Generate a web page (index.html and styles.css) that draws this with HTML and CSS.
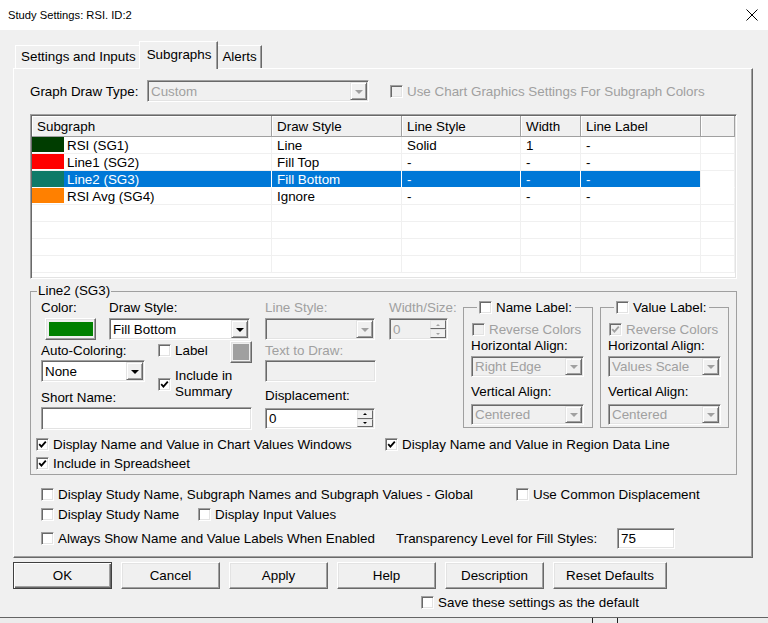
FILE: index.html
```html
<!DOCTYPE html>
<html lang="en">
<head>
  <meta charset="UTF-8">
  <title>Study Settings: RSI. ID:2</title>
  <link rel="stylesheet" href="styles.css">
</head>
<body>
  <div class="titlebar">
    <span class="title">Study Settings: RSI. ID:2</span>
    <svg class="close" width="12" height="12" viewBox="0 0 12 12"><path d="M0.5 0.5L11.5 11.5M11.5 0.5L0.5 11.5" stroke="#000" stroke-width="1" fill="none"/></svg>
  </div>

  <div class="dialog">
    <div class="tabs">
      <div class="tab">Settings and Inputs</div>
      <div class="tab active">Subgraphs</div>
      <div class="tab">Alerts</div>
    </div>

    <div class="panel">
      <!-- graph draw type -->
      <div class="draw-type">
        <span class="dt-label">Graph Draw Type:</span>
        <div class="field combo off w-custom"><span>Custom</span><span class="arrow"><i class="tri"></i></span></div>
        <div class="check off chart-colors"><span class="cb"></span>Use Chart Graphics Settings For Subgraph Colors</div>
      </div>

      <!-- subgraph list -->
      <div class="list">
        <div class="lhead">
          <div class="c c1">Subgraph</div>
          <div class="c c2">Draw Style</div>
          <div class="c c3">Line Style</div>
          <div class="c c4">Width</div>
          <div class="c c5">Line Label</div>
          <div class="c c6"></div>
        </div>
        <div class="lrow">
          <div class="c c1"><span class="sw" style="background:#003d00"></span><span class="name">RSI (SG1)</span></div>
          <div class="c c2">Line</div>
          <div class="c c3">Solid</div>
          <div class="c c4">1</div>
          <div class="c c5">-</div>
          <div class="c c6"></div>
        </div>
        <div class="lrow">
          <div class="c c1"><span class="sw" style="background:#ff0000"></span><span class="name">Line1 (SG2)</span></div>
          <div class="c c2">Fill Top</div>
          <div class="c c3">-</div>
          <div class="c c4">-</div>
          <div class="c c5">-</div>
          <div class="c c6"></div>
        </div>
        <div class="lrow sel">
          <div class="c c1"><span class="sw" style="background:#0e7a68"></span><span class="name">Line2 (SG3)</span></div>
          <div class="c c2">Fill Bottom</div>
          <div class="c c3">-</div>
          <div class="c c4">-</div>
          <div class="c c5">-</div>
          <div class="c c6"></div>
        </div>
        <div class="lrow">
          <div class="c c1"><span class="sw" style="background:#ff8000"></span><span class="name">RSI Avg (SG4)</span></div>
          <div class="c c2">Ignore</div>
          <div class="c c3">-</div>
          <div class="c c4">-</div>
          <div class="c c5">-</div>
          <div class="c c6"></div>
        </div>
        <div class="lrow"><div class="c c1"></div><div class="c c2"></div><div class="c c3"></div><div class="c c4"></div><div class="c c5"></div><div class="c c6"></div></div>
        <div class="lrow"><div class="c c1"></div><div class="c c2"></div><div class="c c3"></div><div class="c c4"></div><div class="c c5"></div><div class="c c6"></div></div>
        <div class="lrow"><div class="c c1"></div><div class="c c2"></div><div class="c c3"></div><div class="c c4"></div><div class="c c5"></div><div class="c c6"></div></div>
        <div class="lrow"><div class="c c1"></div><div class="c c2"></div><div class="c c3"></div><div class="c c4"></div><div class="c c5"></div><div class="c c6"></div></div>
      </div>

      <!-- selected subgraph -->
      <fieldset class="group">
        <legend>Line2 (SG3)</legend>
        <div class="group-body">
          <div class="group-top">
            <div class="col-a">
              <div class="a-row1">
                <div class="f-color">
                  <div class="lbl">Color:</div>
                  <div class="btn3d colorbtn"><span class="swatch green"></span></div>
                </div>
                <div class="f-draw">
                  <div class="lbl">Draw Style:</div>
                  <div class="field combo w-draw"><span>Fill Bottom</span><span class="arrow"><i class="tri"></i></span></div>
                </div>
              </div>
              <div class="a-grid">
                <div class="lbl auto-lbl">Auto-Coloring:</div>
                <div class="field combo w-none"><span>None</span><span class="arrow"><i class="tri"></i></span></div>
                <div class="lbl short-lbl">Short Name:</div>
                <div class="field w-short"></div>
                <div class="checks">
                  <div class="label-row">
                    <div class="check label-check"><span class="cb"></span>Label</div>
                    <div class="btn3d graybtn"><span class="swatch gray"></span></div>
                  </div>
                  <div class="check summary"><span class="cb"><svg width="9" height="9" viewBox="0 0 9 9"><polyline points="1.2,4.2 3.4,6.6 7.8,1.6" fill="none" stroke="#000" stroke-width="1.8"/></svg></span><span>Include in<br>Summary</span></div>
                </div>
              </div>
            </div>

            <div class="col-b">
              <div class="lbl off">Line Style:</div>
              <div class="field combo off w-b b-combo"><span></span><span class="arrow"><i class="tri"></i></span></div>
              <div class="lbl off b-text-lbl">Text to Draw:</div>
              <div class="field off w-b b-text"></div>
              <div class="lbl b-disp-lbl">Displacement:</div>
              <div class="field spin w-b b-disp"><span>0</span><span class="spin-btns"><span><i class="up"></i></span><span><i class="down"></i></span></span></div>
            </div>

            <div class="col-w">
              <div class="lbl off">Width/Size:</div>
              <div class="field spin off w-width"><span>0</span><span class="spin-btns"><span><i class="up"></i></span><span><i class="down"></i></span></span></div>
            </div>

            <fieldset class="sub name-group">
              <legend><span class="check"><span class="cb"></span>Name Label:</span></legend>
              <div class="check off rev"><span class="cb"></span>Reverse Colors</div>
              <div class="lbl h-lbl">Horizontal Align:</div>
              <div class="field combo off w-align"><span>Right Edge</span><span class="arrow"><i class="tri"></i></span></div>
              <div class="lbl v-lbl">Vertical Align:</div>
              <div class="field combo off w-align v-combo"><span>Centered</span><span class="arrow"><i class="tri"></i></span></div>
            </fieldset>

            <fieldset class="sub value-group">
              <legend><span class="check"><span class="cb"></span>Value Label:</span></legend>
              <div class="check off rev"><span class="cb"><svg width="9" height="9" viewBox="0 0 9 9"><polyline points="1.2,4.2 3.4,6.6 7.8,1.6" fill="none" stroke="#a0a0a0" stroke-width="1.8"/></svg></span>Reverse Colors</div>
              <div class="lbl h-lbl">Horizontal Align:</div>
              <div class="field combo off w-align"><span>Values Scale</span><span class="arrow"><i class="tri"></i></span></div>
              <div class="lbl v-lbl">Vertical Align:</div>
              <div class="field combo off w-align v-combo"><span>Centered</span><span class="arrow"><i class="tri"></i></span></div>
            </fieldset>
          </div>

          <div class="g-row">
            <div class="check w-chart"><span class="cb"><svg width="9" height="9" viewBox="0 0 9 9"><polyline points="1.2,4.2 3.4,6.6 7.8,1.6" fill="none" stroke="#000" stroke-width="1.8"/></svg></span>Display Name and Value in Chart Values Windows</div>
            <div class="check"><span class="cb"><svg width="9" height="9" viewBox="0 0 9 9"><polyline points="1.2,4.2 3.4,6.6 7.8,1.6" fill="none" stroke="#000" stroke-width="1.8"/></svg></span>Display Name and Value in Region Data Line</div>
          </div>
          <div class="g-row g-row2">
            <div class="check"><span class="cb"><svg width="9" height="9" viewBox="0 0 9 9"><polyline points="1.2,4.2 3.4,6.6 7.8,1.6" fill="none" stroke="#000" stroke-width="1.8"/></svg></span>Include in Spreadsheet</div>
          </div>
        </div>
      </fieldset>

      <!-- global options -->
      <div class="globals">
        <div class="gl-row r1">
          <div class="check w-global"><span class="cb"></span>Display Study Name, Subgraph Names and Subgraph Values - Global</div>
          <div class="check"><span class="cb"></span>Use Common Displacement</div>
        </div>
        <div class="gl-row r2">
          <div class="check w-study"><span class="cb"></span>Display Study Name</div>
          <div class="check"><span class="cb"></span>Display Input Values</div>
        </div>
        <div class="gl-row r3">
          <div class="check w-always"><span class="cb"></span>Always Show Name and Value Labels When Enabled</div>
          <span class="w-transp">Transparency Level for Fill Styles:</span>
          <div class="field w-75"><span>75</span></div>
        </div>
      </div>
    </div>

    <div class="buttons">
      <div class="btn default">OK</div>
      <div class="btn">Cancel</div>
      <div class="btn">Apply</div>
      <div class="btn">Help</div>
      <div class="btn">Description</div>
      <div class="btn wide">Reset Defaults</div>
    </div>
    <div class="check save"><span class="cb"></span>Save these settings as the default</div>
  </div>

  <div class="edge"></div>
  <div class="under"><span class="mark m1"></span><span class="mark m2"></span></div>
</body>
</html>
```

FILE: styles.css
```css
* {
  box-sizing: border-box;
}
body {
  margin: 0;
  width: 768px;
  height: 623px;
  overflow: hidden;
  background-color: #f0f0f0;
  font: 13.4px/15px "Liberation Sans", Arial, sans-serif;
  color: #000;
}
.titlebar {
  height: 30px;
  background-color: #fff;
  display: flex;
  align-items: center;
  justify-content: space-between;
  padding: 0 10px 0 8px;
  font-size: 11.2px;
}
.dialog {
  height: 587px;
  padding: 10px 15px 0 13px;
}

/* tabs */
.tabs {
  display: flex;
  align-items: flex-end;
  height: 28px;
  padding-left: 2px;
}
.tab {
  height: 23px;
  padding: 0 4px 0 5px;
  line-height: 22px;
  border: 1px solid;
  border-bottom: 0;
  border-color: #fff #696969 #fff #fff;
  box-shadow: inset -1px 0 #a0a0a0;
}
.tab.active {
  height: 28px;
  margin: 0 -2px -1px;
  padding: 0 6px 0 7px;
  line-height: 25px;
  position: relative;
  z-index: 1;
  background-color: #f0f0f0;
}
.panel {
  height: 490px;
  border: 1px solid;
  border-color: #fff #696969 #696969 #fff;
  box-shadow: inset -1px -1px #a0a0a0;
  padding: 11px 0 0 16px;
}

/* common controls */
.lbl {
  height: 15px;
  white-space: nowrap;
}
.off {
  color: #a0a0a0;
}
.field {
  display: flex;
  align-items: center;
  height: 22px;
  padding-left: 3px;
  background-color: #fff;
  border: 1px solid;
  border-color: #a0a0a0 #fff #fff #a0a0a0;
  box-shadow: inset 1px 1px #696969, inset -1px -1px #e3e3e3;
  white-space: nowrap;
}
.field.off {
  background-color: #f0f0f0;
}
.arrow {
  align-self: stretch;
  width: 17px;
  margin: 1px 1px 1px auto;
  display: flex;
  align-items: center;
  justify-content: center;
  background-color: #f0f0f0;
  border: 1px solid;
  border-color: #e3e3e3 #696969 #696969 #e3e3e3;
  box-shadow: inset 1px 1px #fff, inset -1px -1px #a0a0a0;
}
.tri {
  width: 0;
  height: 0;
  border: 4px solid transparent;
  border-top-color: #000;
  border-bottom: 0;
  margin-top: 1px;
}
.off .tri {
  border-top-color: #a0a0a0;
}
.spin-btns {
  align-self: stretch;
  width: 16px;
  margin: 1px 1px 1px auto;
  display: flex;
  flex-direction: column;
}
.spin-btns span {
  flex: 1;
  display: flex;
  align-items: center;
  justify-content: center;
  background-color: #f0f0f0;
  border: 1px solid;
  border-color: #e3e3e3 #696969 #696969 #e3e3e3;
}
.up,
.down {
  width: 0;
  height: 0;
  border: 2px solid transparent;
}
.up {
  border-bottom-color: #000;
  border-top: 0;
}
.down {
  border-top-color: #000;
  border-bottom: 0;
}
.off .up {
  border-bottom-color: #a0a0a0;
}
.off .down {
  border-top-color: #a0a0a0;
}
.check {
  display: flex;
  align-items: center;
  gap: 4px;
  height: 15px;
  white-space: nowrap;
}
.cb {
  flex: none;
  width: 13px;
  height: 13px;
  display: flex;
  align-items: center;
  justify-content: center;
  background-color: #fff;
  border: 1px solid;
  border-color: #a0a0a0 #fff #fff #a0a0a0;
  box-shadow: inset 1px 1px #696969, inset -1px -1px #e3e3e3;
}
.off .cb {
  background-color: #f0f0f0;
}
.btn3d {
  display: flex;
  align-items: center;
  justify-content: center;
  background-color: #f0f0f0;
  border: 1px solid;
  border-color: #fff #696969 #696969 #fff;
  box-shadow: inset -1px -1px #a0a0a0, inset 1px 1px #e3e3e3;
}

/* graph draw type row */
.draw-type {
  display: flex;
  align-items: center;
  height: 22px;
}
.dt-label {
  width: 117px;
}
.w-custom {
  width: 222px;
}
.chart-colors {
  margin-left: 21px;
}

/* list */
.list {
  margin-top: 12px;
  width: 707px;
  height: 165px;
  padding: 1px;
  overflow: hidden;
  background-color: #fff;
  border: 1px solid;
  border-color: #a0a0a0 #fff #fff #a0a0a0;
  box-shadow: inset 1px 1px #696969, inset -1px -1px #e3e3e3;
}
.lhead,
.lrow {
  display: flex;
}
.lhead {
  height: 21px;
}
.lhead .c {
  background-color: #f0f0f0;
  border-right: 1px solid #a0a0a0;
  border-bottom: 1px solid #a0a0a0;
  box-shadow: inset 1px 1px #fff;
  padding-left: 5px;
}
.lrow {
  height: 17px;
}
.c {
  display: flex;
  align-items: center;
  padding-left: 5px;
  white-space: nowrap;
  overflow: hidden;
}
.lrow .c {
  border-right: 1px solid #f0f0f0;
  border-bottom: 1px solid #f0f0f0;
}
.c1 { width: 240px; }
.c2 { width: 130px; }
.c3 { width: 119px; }
.c4 { width: 60px; }
.c5 { width: 120px; }
.c6 { flex: 1; }
.lrow .c1 {
  padding-left: 0;
}
.sw {
  width: 32px;
  height: 15px;
  align-self: flex-start;
  flex: none;
}
.name {
  padding-left: 3px;
  align-self: stretch;
  display: flex;
  align-items: center;
  flex: 1;
}
.sel .c2,
.sel .c3,
.sel .c4,
.sel .c5,
.sel .name {
  background-color: #0078d7;
  color: #fff;
}
.sel .c {
  border-bottom-color: #fff;
}
.sel .c1,
.sel .c2,
.sel .c3,
.sel .c4 {
  border-right-color: #fff;
}
.sel .sw {
  height: 16px;
}

/* group box */
.group {
  margin: 4px 0 0;
  padding: 0;
  width: 707px;
  height: 192px;
  min-width: 0;
  border: 1px solid #a0a0a0;
}
.group > legend {
  margin-left: 6px;
  padding: 0 1px;
  line-height: 16px;
}
.group-body {
  padding: 1px 0 0 5px;
}
.group-top {
  display: flex;
  padding-left: 5px;
}
.col-a {
  width: 211px;
  margin-right: 13px;
}
.a-row1 {
  display: flex;
}
.f-color {
  width: 55px;
  margin-right: 13px;
}
.colorbtn {
  width: 51px;
  height: 22px;
  margin: 3px 0 0 4px;
}
.swatch {
  display: block;
}
.swatch.green {
  width: 44px;
  height: 14px;
  background-color: #008000;
}
.f-draw {
  width: 141px;
}
.w-draw {
  margin-top: 3px;
}
.a-grid {
  display: grid;
  grid-template-columns: 104px 13px 94px;
  grid-template-rows: 17px 30px 17px 23px;
  margin-top: 3px;
}
.auto-lbl {
  grid-area: 1 / 1;
}
.w-none {
  grid-area: 2 / 1;
}
.short-lbl {
  grid-area: 3 / 1;
}
.w-short {
  grid-area: 4 / 1 / 5 / 4;
  height: 23px;
}
.checks {
  grid-area: 1 / 3 / 4 / 4;
  margin-top: -2px;
}
.label-row {
  display: flex;
  height: 22px;
}
.label-check {
  margin-top: 2px;
}
.graybtn {
  width: 22px;
  height: 22px;
  margin-left: auto;
}
.swatch.gray {
  width: 16px;
  height: 16px;
  background-color: #a0a0a0;
}
.summary {
  height: 32px;
  margin-top: 5px;
  line-height: 16px;
}
.col-b {
  width: 111px;
  margin-right: 13px;
}
.w-b {
  width: 110px;
}
.b-combo {
  margin-top: 3px;
}
.b-text-lbl {
  margin-top: 3px;
}
.b-text {
  width: 111px;
  margin-top: 2px;
}
.b-disp-lbl {
  margin-top: 6px;
}
.b-disp {
  height: 21px;
  margin-top: 5px;
}
.col-w {
  width: 59px;
  margin-right: 15px;
}
.w-width {
  margin-top: 3px;
}

/* name / value label boxes */
.sub {
  margin: 0;
  padding: 0 0 0 7px;
  height: 128px;
  min-width: 0;
  overflow: hidden;
  border: 1px solid #a0a0a0;
}
.name-group {
  width: 130px;
  margin-right: 7px;
}
.value-group {
  width: 129px;
}
.sub > legend {
  margin-left: 6px;
  padding: 0 3px 0 2px;
}
.rev {
  margin: 7px 0 0 1px;
}
.h-lbl {
  margin-top: 1px;
}
.w-align {
  width: 113px;
  height: 21px;
  margin-top: 3px;
}
.v-lbl {
  margin-top: 7px;
}
.v-combo {
  margin-top: 5px;
}

/* rows at the foot of the group */
.g-row {
  display: flex;
  margin-top: 7px;
}
.g-row2 {
  margin-top: 4px;
}
.w-chart {
  width: 349px;
}

/* global options */
.globals {
  margin-left: 11px;
}
.gl-row {
  display: flex;
  align-items: center;
}
.r1 {
  margin-top: 12px;
}
.r2 {
  margin-top: 5px;
}
.r3 {
  margin-top: 6px;
  height: 21px;
}
.w-global {
  width: 475px;
}
.w-study {
  width: 157px;
}
.w-always {
  width: 355px;
}
.w-transp {
  width: 221px;
}
.w-75 {
  width: 58px;
  height: 21px;
}

/* buttons */
.buttons {
  display: flex;
  gap: 9px;
  margin-top: 4px;
}
.btn {
  width: 99px;
  height: 27px;
  display: flex;
  align-items: center;
  justify-content: center;
  background-color: #f0f0f0;
  border: 1px solid;
  border-color: #fff #696969 #696969 #fff;
  box-shadow: inset -1px -1px #a0a0a0, inset 1px 1px #e3e3e3;
}
.btn.default {
  border-color: #404040;
  box-shadow: inset 1px 1px #fff, inset -1px -1px #696969, inset -2px -2px #a0a0a0;
}
.btn.wide {
  width: 114px;
}
.save {
  height: 17px;
  margin: 5px 0 0 408px;
}

/* window edge */
.edge {
  height: 1px;
  background-color: #646464;
}
.under {
  display: flex;
  height: 5px;
  background-color: #ececec;
}
.mark {
  width: 1px;
  background-color: #222;
}
.m1 {
  margin-left: 592px;
}
.m2 {
  margin-left: 24px;
}
```
